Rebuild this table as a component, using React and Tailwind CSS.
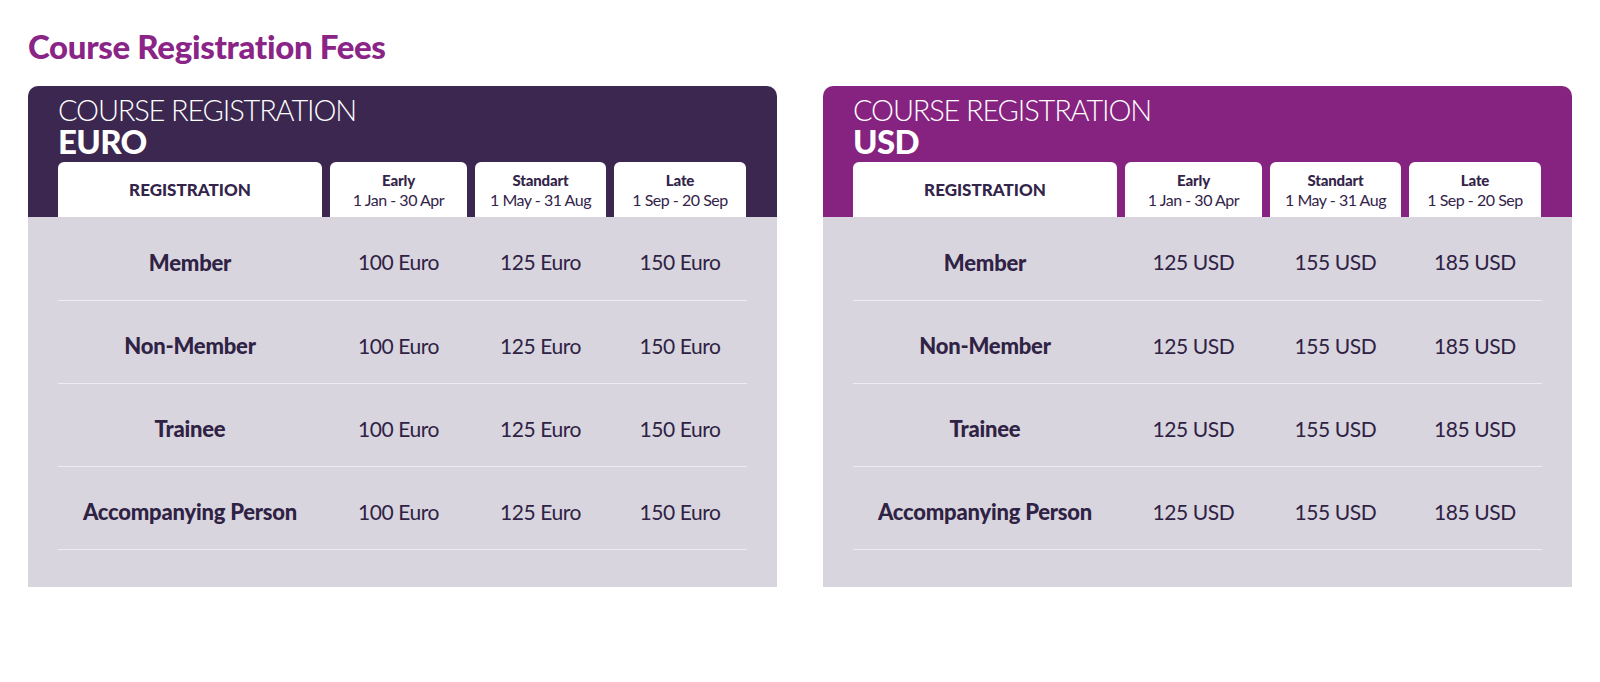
import React from 'react'

const ROWS = ['Member', 'Non-Member', 'Trainee', 'Accompanying Person']

const PERIODS = [
  { name: 'Early', dates: '1 Jan - 30 Apr' },
  { name: 'Standart', dates: '1 May - 31 Aug' },
  { name: 'Late', dates: '1 Sep - 20 Sep' },
]

const COLS = 'grid grid-cols-[264px_137px_131px_132px] gap-x-[8px]'

function FeeCard({ currency, prices, headerBg }) {
  return (
    <div className="w-[749px] shrink-0">
      <div className={`${headerBg} rounded-t-[10px] px-[30px] pt-[8px]`}>
        <div className="text-white text-[29px] leading-[31px] font-light tracking-[-0.04em]">
          COURSE REGISTRATION
        </div>
        <div className="text-white text-[33px] leading-[33px] font-black tracking-[-0.02em]">
          {currency}
        </div>
        <div className={`${COLS} mt-[4px]`}>
          <div className="h-[55px] bg-white rounded-t-[6px] flex items-center justify-center text-[17px] font-black text-[#33244a]">
            REGISTRATION
          </div>
          {PERIODS.map((p) => (
            <div
              key={p.name}
              className="h-[55px] bg-white rounded-t-[6px] flex flex-col items-center justify-center text-[#33244a] leading-[20px]"
            >
              <span className="text-[15px] font-black tracking-[-0.01em]">{p.name}</span>
              <span className="text-[16px] font-normal tracking-[-0.03em]">{p.dates}</span>
            </div>
          ))}
        </div>
      </div>
      <div className="bg-[#d8d5de] px-[30px] pb-[37px]">
        {ROWS.map((r, i) => (
          <div
            key={r}
            className={`${COLS} items-center pt-[7px] border-b border-[#eeecf1] ${i === 0 ? 'h-[84px]' : 'h-[83px]'}`}
          >
            <div className="text-center text-[22px] font-black text-[#2f2244] tracking-[-0.01em]">{r}</div>
            {prices.map((p) => (
              <div key={p} className="text-center text-[21px] text-[#2f2244] tracking-[-0.02em]">
                {p} {currency === 'EURO' ? 'Euro' : 'USD'}
              </div>
            ))}
          </div>
        ))}
      </div>
    </div>
  )
}

export default function App() {
  return (
    <div className="w-[1600px] h-[682px] bg-white font-['Lato',sans-serif] pl-[28px] pt-[28px]">
      <h2 className="text-[33px] leading-[36px] font-black text-[#8a2587] tracking-[-0.01em]">
        Course Registration Fees
      </h2>
      <div className="flex gap-[46px] mt-[22px]">
        <FeeCard currency="EURO" prices={[100, 125, 150]} headerBg="bg-[#3b2750]" />
        <FeeCard currency="USD" prices={[125, 155, 185]} headerBg="bg-[#86227f]" />
      </div>
    </div>
  )
}
